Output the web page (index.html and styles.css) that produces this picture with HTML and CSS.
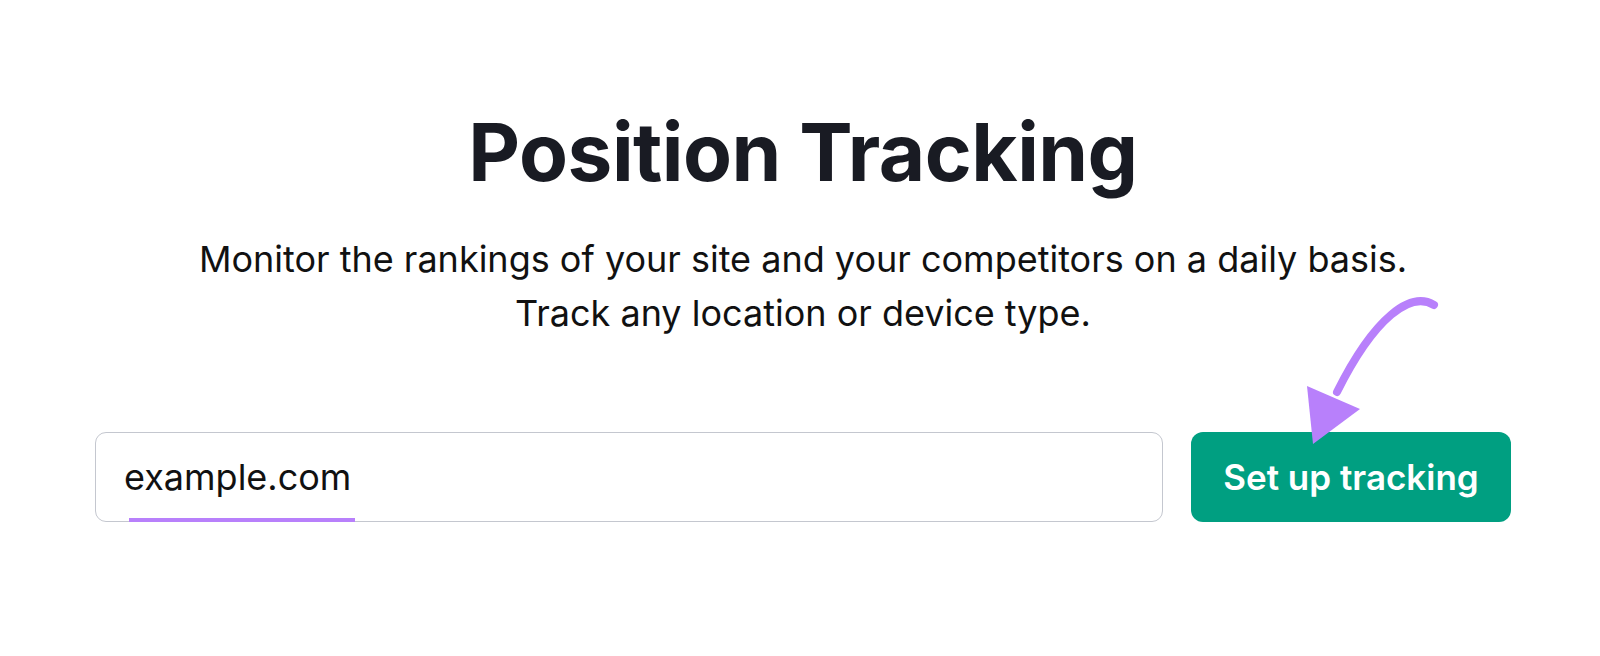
FILE: index.html
```html
<!DOCTYPE html>
<html lang="en">
<head>
    <meta charset="UTF-8">
    <meta name="viewport" content="width=device-width, initial-scale=1.0">
    <title>Position Tracking</title>
    <link rel="stylesheet" href="styles.css">
</head>
<body>
    <div class="tool-intro">
        <h1>Position Tracking</h1>
        <p class="subtitle">Monitor the rankings of your site and your competitors on a daily basis.<br>Track any location or device type.</p>

        <form class="setup-form">
            <div class="domain-field">
                <input type="text" class="domain-input" value="example.com">
                <span class="highlight"></span>
            </div>
            <div class="button-wrap">
                <button type="submit" class="setup-button">Set up tracking</button>
                <!-- annotation arrow -->
                <svg class="pointer" width="160" height="180" viewBox="0 0 160 180">
                    <path d="M143 35 C120 21 84 46 46 122" fill="none" stroke="#b880fb" stroke-width="8" stroke-linecap="round"/>
                    <polygon points="16,116 69,139 22,174" fill="#b880fb"/>
                </svg>
            </div>
        </form>
    </div>
</body>
</html>
```

FILE: styles.css
```css
/* Basic Styling */
body {
    margin: 0;
    background: #fff;
    font-family: Inter, "Noto Sans", Arial, sans-serif;
    color: #171a22;
}

.tool-intro {
    display: flex;
    flex-direction: column;
    align-items: center;
    padding: 102px 0 0 6px;
}

h1 {
    margin: 0;
    font-size: 80px;
    font-weight: 700;
    line-height: 100px;
    color: #191b23;
    letter-spacing: -0.5px;
}

.subtitle {
    margin: 30px 0 0;
    font-size: 36px;
    line-height: 54px;
    text-align: center;
    color: #111;
}

.setup-form {
    display: flex;
    gap: 28px;
    margin-top: 92px;
}

.domain-field {
    position: relative;
}

.domain-input {
    box-sizing: border-box;
    width: 1068px;
    height: 90px;
    padding: 0 28px;
    border: 1px solid #c4c7cf;
    border-radius: 11px;
    font-family: inherit;
    font-size: 36px;
    color: #111;
    outline: none;
}

.highlight {
    position: absolute;
    left: 34px;
    top: 86px;
    width: 226px;
    height: 6px;
    background: #b880fb;
}

.button-wrap {
    position: relative;
}

.setup-button {
    width: 320px;
    height: 90px;
    border: none;
    border-radius: 12px;
    background: #009f81;
    color: #fff;
    font-family: inherit;
    font-size: 35px;
    font-weight: 600;
    cursor: pointer;
}

.pointer {
    position: absolute;
    left: 100px;
    top: -162px;
    overflow: visible;
}
```
